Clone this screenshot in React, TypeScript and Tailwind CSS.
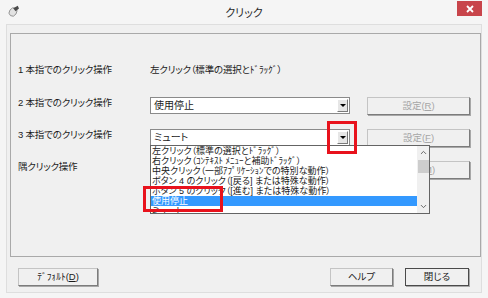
import { ChevronDown, ChevronUp } from "lucide-react"

const listItems = [
  "左クリック（標準の選択とﾄﾞﾗｯｸﾞ）",
  "右クリック（ｺﾝﾃｷｽﾄ ﾒﾆｭｰと補助ﾄﾞﾗｯｸﾞ）",
  "中央クリック（一部ｱﾌﾟﾘｹｰｼｮﾝでの特別な動作）",
  "ボタン 4 のクリック（[戻る] または特殊な動作）",
  "ボタン 5 のクリック（[進む] または特殊な動作）",
  "使用停止",
  "ミュート",
]

function Select({ value }: { value: string }) {
  return (
    <div className="w-[200px] h-[17px] bg-white border border-[#8a8a8a] flex items-center">
      <span className="flex-1 pl-[3px] text-[10px] leading-[10px]">{value}</span>
      <div className="w-[11px] h-[13px] mr-[1px] bg-[#e6e6e6] border border-t-white border-l-white border-r-[#7a7a7a] border-b-[#7a7a7a] flex items-center justify-center">
        <div className="w-0 h-0 border-l-[3px] border-r-[3px] border-t-[3px] border-l-transparent border-r-transparent border-t-black" />
      </div>
    </div>
  )
}

function Btn({ children, disabled, primary, width }: { children: React.ReactNode; disabled?: boolean; primary?: boolean; width: string }) {
  return (
    <div
      className={
        (primary ? "border-[#4a4a4a] " : "border-[#c4c4c4] border-r-[#7c7c7c] border-b-[#7c7c7c] ") +
        "h-[18px] border bg-[#f0f0f0] flex items-center justify-center text-[9.5px] leading-[10px] shadow-[1px_1px_0_#a8a8a8] " +
        width +
        (disabled ? " text-[#a6a6a6]" : " text-[#1b1b1b]")
      }
    >
      {children}
    </div>
  )
}

export default function App() {
  return (
    <div className="w-[488px] h-[298px] bg-[#f5f5f5] flex flex-col text-[#1b1b1b] font-['Liberation_Sans','Noto_Sans_CJK_JP',sans-serif] [font-feature-settings:'palt']">
      {/* title bar */}
      <div className="h-[24px] flex items-start shrink-0">
        <div className="w-[60px] pl-[8px] pt-[5px]">
          <svg width="12" height="12" viewBox="0 0 12 12">
            <ellipse cx="5" cy="7" rx="3.6" ry="4.4" transform="rotate(35 5 7)" fill="#e2e2e2" stroke="#8a8a8a" strokeWidth="0.8" />
            <path d="M5.2 3.2 L9.8 0.8 L11 3.6 L7.6 6.2 Z" fill="#4a4a4a" />
          </svg>
        </div>
        <div className="flex-1 text-center text-[11px] leading-[11px] pt-[8px] text-[#2a2a2a]">クリック</div>
        <div className="w-[60px] flex justify-end pr-[6px] pt-[1px]">
          <div className="w-[25px] h-[15px] bg-[#c8454b] flex items-center justify-center">
            <svg width="8" height="8" viewBox="0 0 8 8">
              <path d="M1 1 L7 7 M7 1 L1 7" stroke="white" strokeWidth="1.8" />
            </svg>
          </div>
        </div>
      </div>

      {/* client area */}
      <div className="mx-[6px] mb-[5px] flex-1 border border-[#dedede] bg-[#f0f0f0] flex flex-col pl-[3px] pt-[8px]">
        <div className="h-[224px] border border-[#a9a9a9] pl-[7px] pt-[31px] flex flex-col">
          <div className="flex h-[10px] items-center text-[9.5px] leading-[10px] tracking-[-0.2px]">
            <span className="w-[132px] shrink-0">1 本指でのクリック操作</span>
            <span>左クリック（標準の選択とﾄﾞﾗｯｸﾞ）</span>
          </div>

          <div className="flex mt-[22px]">
            <span className="w-[132px] shrink-0 text-[9.5px] leading-[10px] tracking-[-0.2px] pt-[1px]">2 本指でのクリック操作</span>
            <Select value="使用停止" />
            <div className="ml-[17px]">
              <Btn disabled width="w-[103px]">
                設定(<u>R</u>)
              </Btn>
            </div>
          </div>

          <div className="flex mt-[14px]">
            <span className="w-[132px] shrink-0 text-[9.5px] leading-[10px] tracking-[-0.2px] pt-[1px]">3 本指でのクリック操作</span>
            <div className="relative z-10">
              <Select value="ミュート" />
              {/* open list */}
              <div className="absolute left-0 top-[16px] w-[280px] h-[69px] bg-white border border-[#646464] flex">
                <div className="flex-1 flex flex-col overflow-hidden text-[9px] leading-[10px]">
                  {listItems.map((item, i) => (
                    <div
                      key={item}
                      className={
                        i === 5
                          ? "h-[10px] shrink-0 pl-[1px] bg-[#3399ff] text-white whitespace-nowrap"
                          : "h-[10px] shrink-0 pl-[1px] whitespace-nowrap"
                      }
                    >
                      {item}
                    </div>
                  ))}
                </div>
                <div className="w-[12px] bg-[#f0f0f0] flex flex-col items-center">
                  <ChevronUp size={9} strokeWidth={2.5} className="mt-[2px] text-[#606060]" />
                  <div className="w-[11px] h-[13px] bg-[#cdcdcd] mt-[3px]" />
                  <div className="flex-1" />
                  <ChevronDown size={9} strokeWidth={2.5} className="mb-[2px] text-[#606060]" />
                </div>
              </div>
              {/* red highlight frames */}
              <div className="absolute left-[177px] top-[-8px] w-[30px] h-[33px] border-[3px] border-[#e8121c]" />
              <div className="absolute left-[-7px] top-[57px] w-[80px] h-[26px] border-[3px] border-[#e8121c]" />
            </div>
            <div className="ml-[17px]">
              <Btn disabled width="w-[103px]">
                設定(<u>F</u>)
              </Btn>
            </div>
          </div>

          <div className="flex mt-[14px]">
            <span className="w-[132px] shrink-0 text-[9.5px] leading-[10px] tracking-[-0.2px] pt-[1px]">隅クリック操作</span>
            <Select value="使用停止" />
            <div className="ml-[17px]">
              <Btn disabled width="w-[103px]">
                設定(<u>M</u>)
              </Btn>
            </div>
          </div>
        </div>

        <div className="flex mt-[11px] pl-[8px] pr-[12px]">
          <Btn width="w-[80px]">
            ﾃﾞﾌｫﾙﾄ(<u>D</u>)
          </Btn>
          <div className="flex-1" />
          <Btn width="w-[63px]">ヘルプ</Btn>
          <div className="ml-[12px]">
            <Btn primary width="w-[64px]">閉じる</Btn>
          </div>
        </div>
      </div>
    </div>
  )
}
